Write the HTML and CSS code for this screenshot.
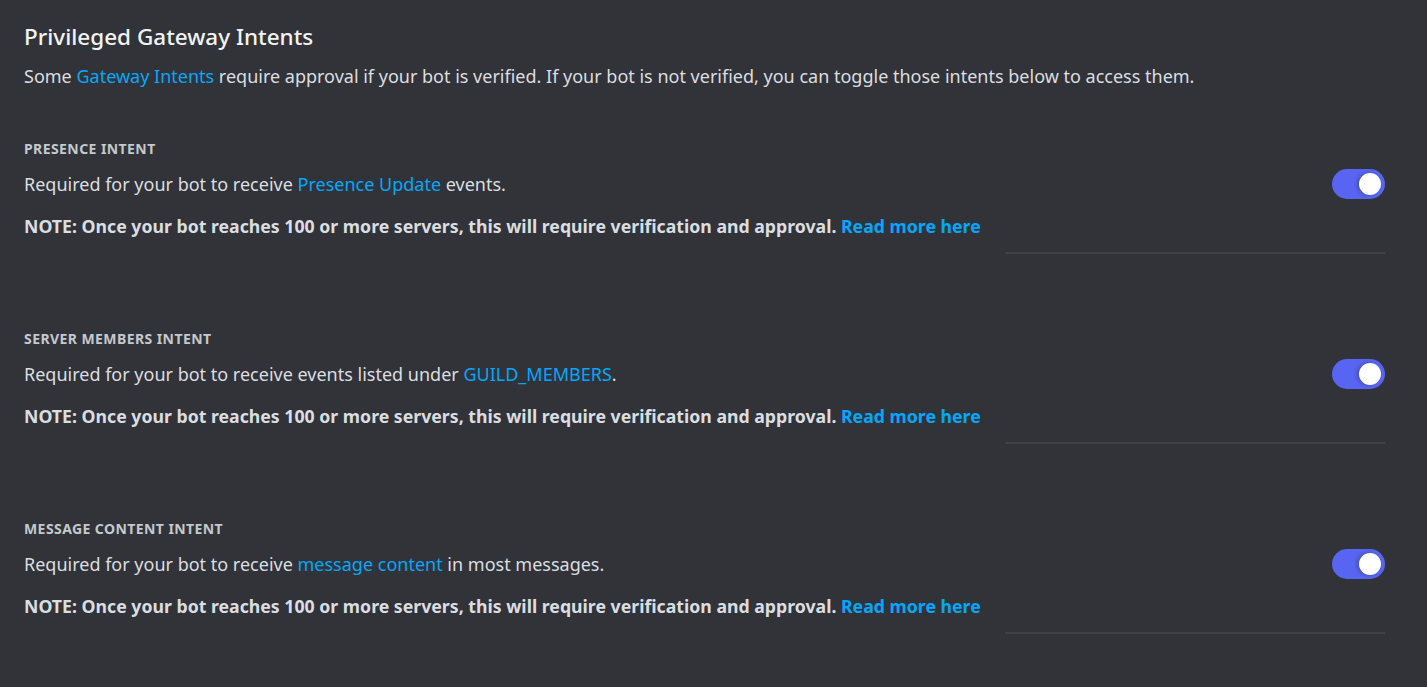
FILE: index.html
```html
<!DOCTYPE html>
<html>
<head>
<meta charset="utf-8">
<link rel="stylesheet" href="styles.css">
</head>
<body>
<main class="page">
  <header class="intro">
    <h1 class="title">Privileged Gateway Intents</h1>
    <p class="lead">Some <a class="link" href="#">Gateway Intents</a> require approval if your bot is verified. If your bot is not verified, you can toggle those intents below to access them.</p>
  </header>

  <section class="intent">
    <h2 class="intent-label">PRESENCE INTENT</h2>
    <div class="intent-row">
      <p class="intent-desc">Required for your bot to receive <a class="link" href="#">Presence Update</a> events.</p>
      <span class="toggle"><span class="knob"></span></span>
    </div>
    <p class="note">NOTE: Once your bot reaches 100 or more servers, this will require verification and approval. <a class="link strong" href="#">Read more here</a></p>
    <div class="divider"></div>
  </section>

  <section class="intent">
    <h2 class="intent-label">SERVER MEMBERS INTENT</h2>
    <div class="intent-row">
      <p class="intent-desc">Required for your bot to receive events listed under <a class="link" href="#">GUILD_MEMBERS</a>.</p>
      <span class="toggle"><span class="knob"></span></span>
    </div>
    <p class="note">NOTE: Once your bot reaches 100 or more servers, this will require verification and approval. <a class="link strong" href="#">Read more here</a></p>
    <div class="divider"></div>
  </section>

  <section class="intent">
    <h2 class="intent-label">MESSAGE CONTENT INTENT</h2>
    <div class="intent-row">
      <p class="intent-desc">Required for your bot to receive <a class="link" href="#">message content</a> in most messages.</p>
      <span class="toggle"><span class="knob"></span></span>
    </div>
    <p class="note">NOTE: Once your bot reaches 100 or more servers, this will require verification and approval. <a class="link strong" href="#">Read more here</a></p>
    <div class="divider"></div>
  </section>
</main>
</body>
</html>
```

FILE: styles.css
```css
html, body {
  margin: 0;
  padding: 0;
  background: #313338;
}
body {
  font-family: "Noto Sans", "Open Sans", sans-serif;
  color: #dbdee1;
  height: 687px;
  overflow: hidden;
}
.page {
  padding: 22px 42px 0 24px;
}
.title {
  margin: 0;
  font-size: 22.5px;
  line-height: 30px;
  font-weight: 500;
  color: #f2f3f5;
}
.lead {
  margin: 12px 0 0;
  font-size: 18px;
  line-height: 24px;
  color: #dbdee1;
}
.link {
  color: #00a8fc;
  text-decoration: none;
}
.strong {
  font-weight: 700;
}
.intent {
  margin-top: 52px;
}
.intent + .intent {
  margin-top: 76px;
}
.intent-label {
  margin: 0;
  font-size: 14px;
  line-height: 18px;
  font-weight: 700;
  letter-spacing: 0.03em;
  color: #c4c9ce;
}
.intent-row {
  display: flex;
  align-items: center;
  justify-content: space-between;
  margin-top: 11px;
}
.intent-desc {
  margin: 0;
  font-size: 18px;
  line-height: 24px;
}
.toggle {
  width: 53px;
  height: 30px;
  border-radius: 15px;
  background: #5865f2;
  position: relative;
  flex: none;
}
.knob {
  position: absolute;
  top: 4px;
  right: 4px;
  width: 22px;
  height: 22px;
  border-radius: 50%;
  background: #fff;
  box-shadow: -2px 0 4px rgba(0,0,0,0.25);
}
.note {
  margin: 15px 0 0;
  font-size: 17.7px;
  line-height: 24px;
  font-weight: 700;
  color: #dbdee1;
}
.divider {
  margin: 14px 0 0 auto;
  width: 380px;
  height: 2px;
  background: #3f4147;
}
```
